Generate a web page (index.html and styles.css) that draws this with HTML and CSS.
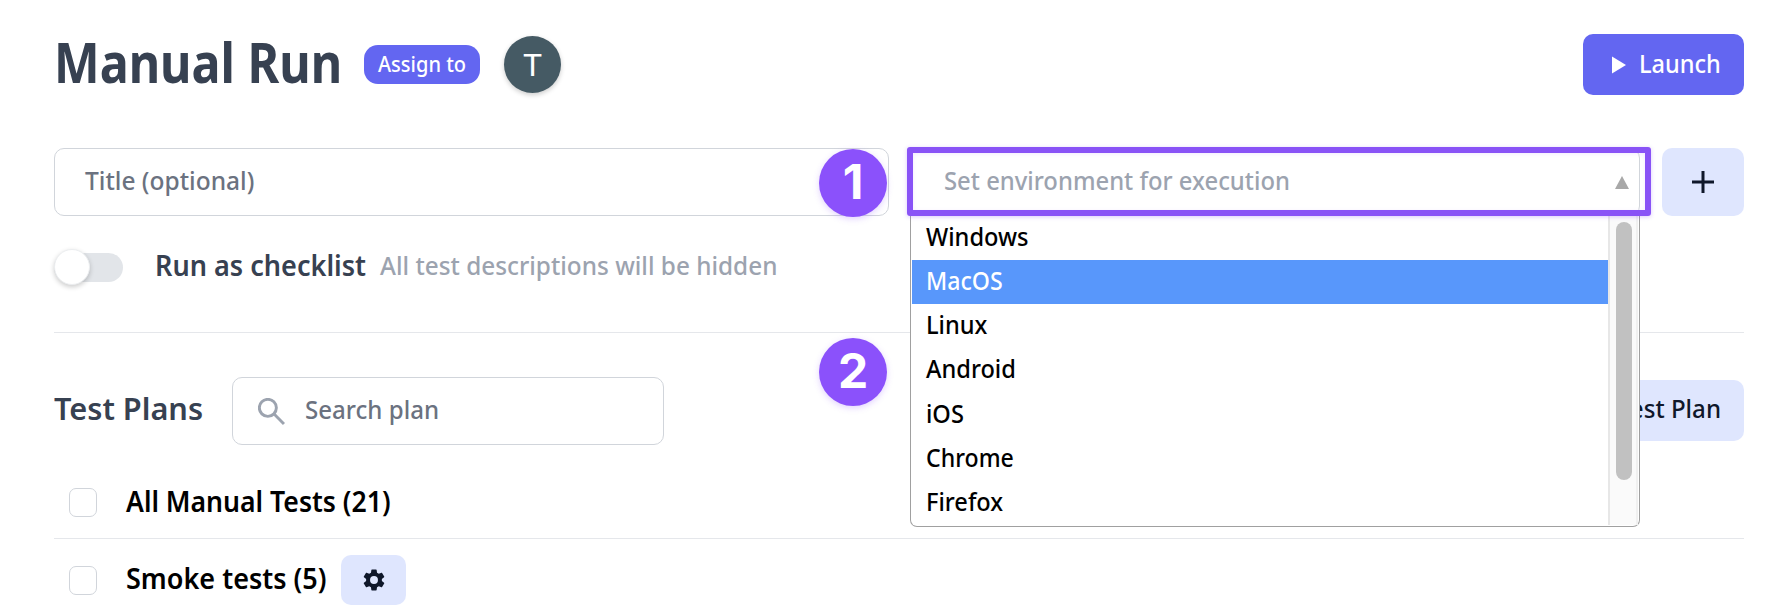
FILE: index.html
```html
<!DOCTYPE html>
<html lang="en">
<head>
<meta charset="utf-8">
<title>Manual Run</title>
<link rel="stylesheet" href="styles.css">
</head>
<body>
<main class="page">
  <header class="header">
    <h1 class="title"><span class="fit fit-title">Manual Run</span></h1>
    <button class="assign"><span class="fit fit-assign">Assign to</span></button>
    <span class="avatar">T</span>
    <button class="launch">
      <svg class="play" viewBox="0 0 14 18"><path d="M0 0.5V17.5L14 9z"/></svg>
      <span class="fit fit-launch">Launch</span>
    </button>
  </header>

  <section class="fields">
    <div class="input title-input"><span class="fit fit-ttl">Title (optional)</span><span class="badge badge-one">1</span></div>
    <div class="environment">
      <div class="env-input"><span class="fit fit-env">Set environment for execution</span>
        <svg class="caret" viewBox="0 0 14 13"><path d="M7 0L14 13H0z"/></svg>
      </div>
      <div class="dropdown">
        <ul class="options">
          <li class="option"><span class="fit">Windows</span></li>
          <li class="option selected"><span class="fit fit-mac">MacOS</span></li>
          <li class="option"><span class="fit">Linux</span></li>
          <li class="option"><span class="fit">Android</span></li>
          <li class="option"><span class="fit">iOS</span></li>
          <li class="option"><span class="fit fit-mac">Chrome</span></li>
          <li class="option"><span class="fit">Firefox</span></li>
        </ul>
        <div class="scrollbar"><div class="thumb"></div></div>
      </div>
      <div class="highlight"></div>
    </div>
    <button class="add"><svg class="plus" viewBox="0 0 22 22"><path d="M11 0V22M0 11H22"/></svg></button>
  </section>

  <section class="checklist">
    <span class="toggle"><span class="knob"></span></span>
    <strong class="check-name"><span class="fit fit-check">Run as checklist</span></strong>
    <span class="hint"><span class="fit fit-hint">All test descriptions will be hidden</span></span>
  </section>

  <section class="plans">
    <span class="badge badge-two">2</span>
    <h2 class="plans-title"><span class="fit fit-plans">Test Plans</span></h2>
    <div class="input search">
      <svg class="lens" viewBox="0 0 26 26"><circle cx="9.5" cy="9.5" r="8.2"/><path d="M15.5 15.5L25 25"/></svg>
      <span class="fit fit-search">Search plan</span>
    </div>
    <button class="new-plan"><span class="fit fit-new">Test Plan</span></button>
  </section>

  <ul class="plan-list">
    <li class="plan"><span class="checkbox"></span><span class="plan-name"><span class="fit fit-all">All Manual Tests (21)</span></span></li>
    <li class="plan"><span class="checkbox"></span><span class="plan-name smoke"><span class="fit fit-smoke">Smoke tests (5)</span></span>
      <button class="settings"><svg class="gear" viewBox="2 2 20 20"><path fill-rule="evenodd" d="M19.14 12.94c.04-.3.06-.61.06-.94 0-.32-.02-.64-.07-.94l2.03-1.58c.18-.14.23-.41.12-.61l-1.92-3.32c-.12-.22-.37-.29-.59-.22l-2.39.96c-.5-.38-1.03-.7-1.62-.94l-.36-2.54c-.04-.24-.24-.41-.48-.41h-3.84c-.24 0-.43.17-.47.41l-.36 2.54c-.59.24-1.13.57-1.62.94l-2.39-.96c-.22-.08-.47 0-.59.22L2.74 8.87c-.12.21-.08.47.12.61l2.03 1.58c-.05.3-.09.63-.09.94s.02.64.07.94l-2.03 1.58c-.18.14-.23.41-.12.61l1.92 3.32c.12.22.37.29.59.22l2.39-.96c.5.38 1.03.7 1.62.94l.36 2.54c.05.24.24.41.48.41h3.84c.24 0 .44-.17.47-.41l.36-2.54c.59-.24 1.13-.56 1.62-.94l2.39.96c.22.08.47 0 .59-.22l1.92-3.32c.12-.22.07-.47-.12-.61zM12 15.6A3.6 3.6 0 1 1 12 8.4a3.6 3.6 0 0 1 0 7.2z"/></svg></button>
    </li>
  </ul>
</main>
</body>
</html>
```

FILE: styles.css
```css
* { box-sizing: border-box; margin: 0; padding: 0; }
body {
  width: 1792px; height: 616px; overflow: hidden;
  background: #fff; color: #000;
  font-family: "Noto Sans", sans-serif; font-size: 26px; font-weight: 500; line-height: 36px;
}
button { border: 0; font: inherit; color: inherit; }
ul { list-style: none; }
.page { padding: 34px 48px 0 54px; }

/* Slightly condensed labels */
.fit { display: block; white-space: nowrap; transform: translateY(-1.8px) scaleX(var(--fit, .908)); transform-origin: 0 50%; }
.fit-title { --fit: .88; transform: translateY(-3.5px) scaleX(var(--fit)); }
.fit-assign { --fit: .91; }
.fit-launch { --fit: .905; }
.fit-ttl { --fit: .943; }
.fit-env { --fit: .917; }
.fit-mac { --fit: .89; }
.fit-check { --fit: .967; }
.fit-hint { --fit: .936; }
.fit-plans { --fit: .99; transform: translateY(-3px) scaleX(var(--fit)); }
.fit-search { --fit: .926; }
.fit-new { --fit: .927; }
.fit-all { --fit: .95; }
.fit-smoke { --fit: .965; }

.header { display: flex; align-items: center; height: 61px; }
.title { width: 310px; font-size: 55px; line-height: 60px; font-weight: 700; color: #374151; }
.assign {
  width: 116px; height: 39px; padding-left: 14px; border-radius: 14px;
  background: #6366f1; color: #fff; font-size: 22px; text-align: left;
}
.avatar {
  width: 57px; height: 57px; margin-left: 24px; border-radius: 50%;
  background: #455a64; color: #fff; text-align: center;
  font: 400 32px/58px Roboto, sans-serif; box-shadow: 0 2px 5px rgba(0,0,0,.2);
}
.launch {
  display: flex; align-items: center; gap: 13px;
  width: 161px; height: 61px; margin-left: auto; padding-left: 29px;
  border-radius: 10px; background: #6366f1; color: #fff;
}
.play { width: 14px; height: 18px; fill: #fff; }

.fields { display: flex; margin-top: 53px; height: 68px; }
.input {
  display: flex; align-items: center; height: 68px;
  border: 1px solid #d1d5db; border-radius: 10px; color: #6b7280;
}
.title-input { position: relative; width: 835px; padding-left: 30px; }
.badge {
  position: absolute; width: 68px; height: 68px; border-radius: 50%;
  background: #8b51fb; color: #fff; text-align: center;
  font: 700 48px/65px Inter, sans-serif; box-shadow: 0 2px 6px rgba(139,81,251,.25);
}
.badge-one { right: 1px; top: 0; }
.environment { position: relative; width: 730px; margin-left: 21px; }
.env-input {
  display: flex; align-items: center; height: 68px; padding: 0 10px 0 33px;
  border: 1px solid #d1d5db; border-radius: 10px; color: #9ca3af;
}
.caret { width: 14px; height: 13px; margin-left: auto; fill: #a8a8a8; }
.highlight {
  position: absolute; z-index: 2; left: -3px; top: -1px; width: 744px; height: 69px;
  border: 6px solid #8953f6; border-radius: 3px;
  box-shadow: 0 1px 4px rgba(137,83,246,.3), inset 0 1px 4px rgba(137,83,246,.12);
}
.dropdown {
  position: absolute; left: 0; top: 64px; width: 730px; height: 315px; z-index: 1;
  display: flex; padding: 4px 1px 1px;
  background: #fff; border: 1px solid #a0a0a0; border-top: 0; border-radius: 0 0 7px 7px;
}
.options { flex: 1; }
.option { height: 44.17px; padding-left: 14px; line-height: 44px; }
.selected { background: #5897fb; color: #fff; }
.scrollbar { width: 30px; padding: 6px 0 0 6px; background: #fafafa; border-left: 2px solid #e7e7e7; border-right: 2px solid #f0f0f0; }
.thumb { width: 16px; height: 258px; border-radius: 8px; background: #c1c1c1; }
.add {
  display: grid; place-items: center; width: 82px; height: 68px; margin-left: 22px;
  border-radius: 10px; background: #dfe6fe;
}
.plus { width: 22px; height: 22px; fill: none; stroke: #0f172a; stroke-width: 3; }

.checklist { display: flex; align-items: center; height: 117px; padding-bottom: 14px; border-bottom: 1px solid #e5e7eb; }
.toggle { display: flex; align-items: center; width: 69px; height: 29px; border-radius: 15px; background: #e2e5e9; }
.knob { width: 36px; height: 36px; flex: none; border-radius: 50%; background: #fff; border: 1px solid #eceef0; box-shadow: 0 2px 5px rgba(0,0,0,.2); }
.check-name { width: 225px; margin-left: 32px; font-size: 28px; font-weight: 650; color: #374151; }
.hint { color: #9ca3af; }

.plans { position: relative; display: flex; align-items: center; height: 68px; margin-top: 44px; }
.badge-two { left: 765px; top: -39px; }
.plans-title { width: 178px; font-size: 31px; font-weight: 650; color: #374151; }
.search { width: 432px; padding-left: 25px; }
.lens { width: 27px; height: 27px; margin-right: 20px; fill: none; stroke: #9ca3af; stroke-width: 2.8; }
.new-plan {
  width: 190px; height: 61px; margin: 0 0 2px auto; padding-left: 64px;
  border-radius: 10px; background: #dfe6fe; color: #0f172a; text-align: left;
}

.plan-list { margin-top: 16px; }
.plan { display: flex; align-items: center; height: 78px; padding: 6px 0 0 15px; border-bottom: 1px solid #e5e7eb; }
.plan:last-child { border: 0; padding-top: 4px; }
.checkbox { width: 28px; height: 29px; border: 1px solid #d1d5db; border-radius: 7px; }
.plan-name { margin-left: 29px; font-size: 28px; font-weight: 650; }
.smoke { width: 215px; }
.settings { display: grid; place-items: center; width: 65px; height: 50px; border-radius: 10px; background: #dfe6fe; }
.gear { width: 22px; height: 22px; fill: #0f172a; }
```
